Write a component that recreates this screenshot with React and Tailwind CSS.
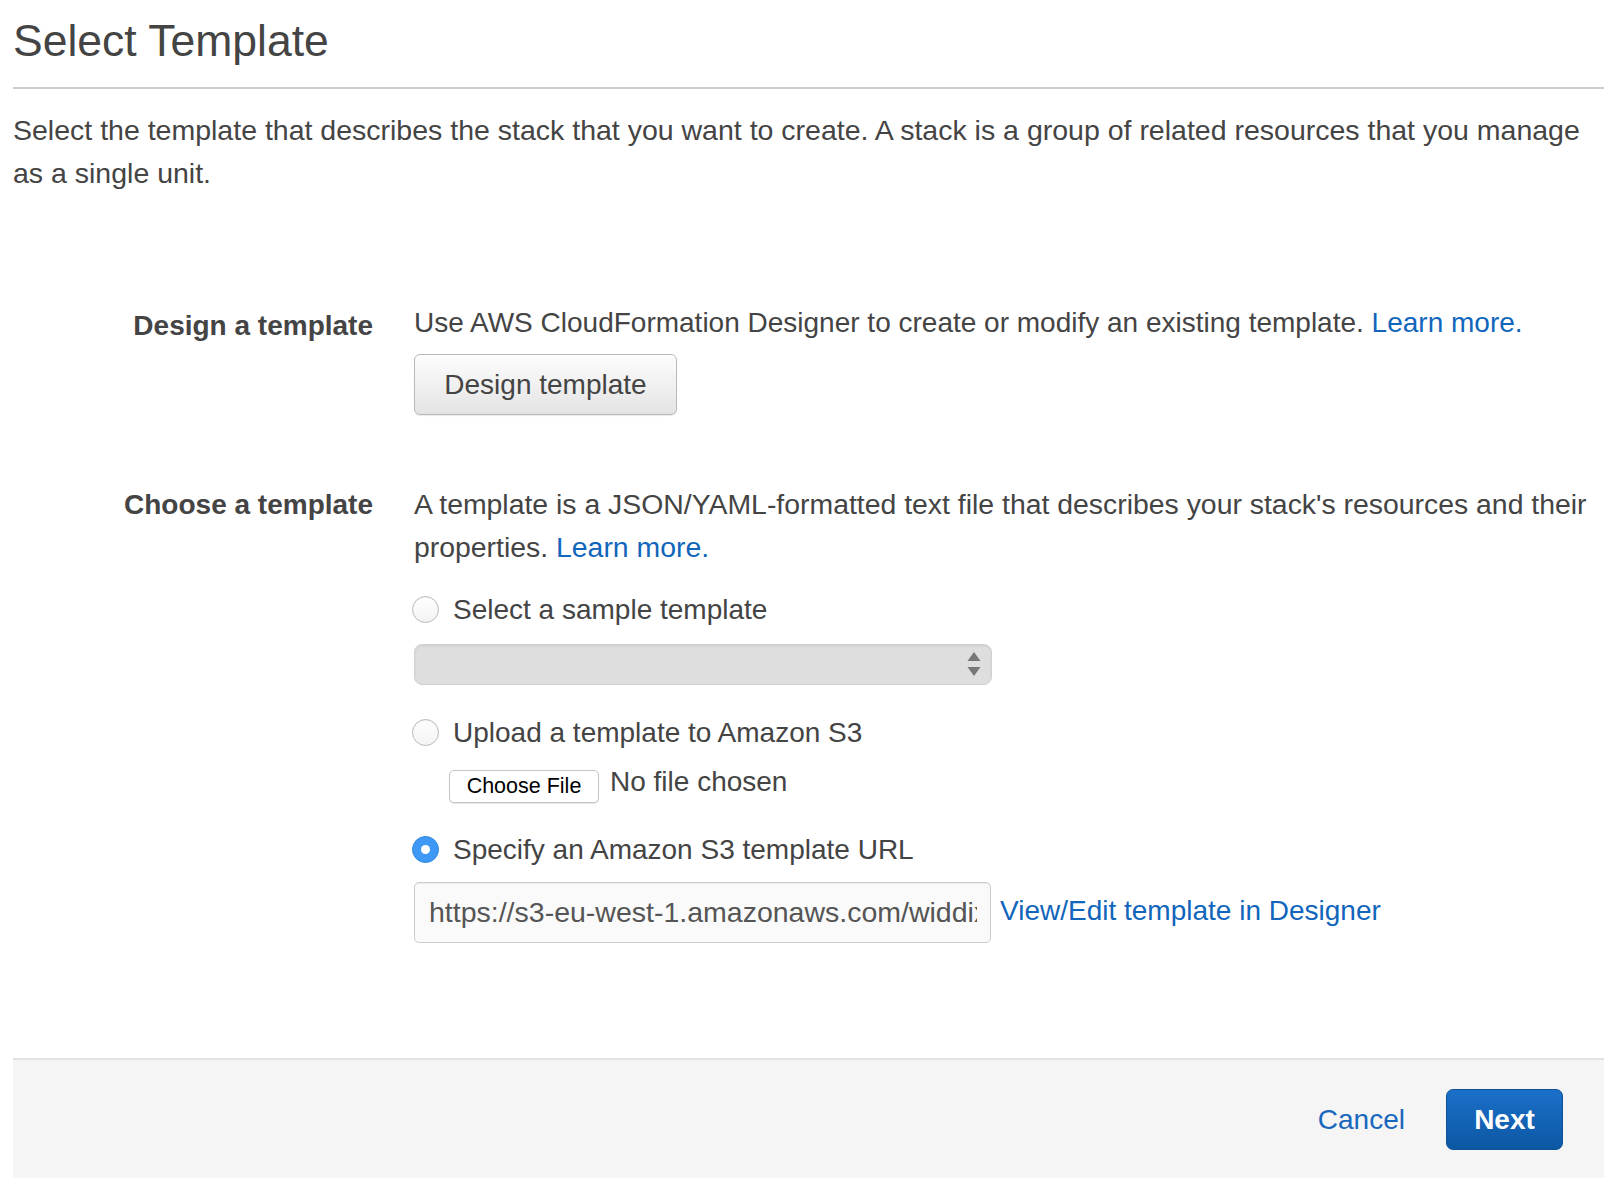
import { useState } from "react";

const Radio = ({ checked, onClick }) => (
  <span
    onClick={onClick}
    className={
      checked
        ? "flex items-center justify-center w-[27px] h-[27px] rounded-full bg-[#3d99f5] border border-[#2f86e0] shrink-0 cursor-pointer"
        : "block w-[27px] h-[27px] rounded-full bg-gradient-to-b from-white to-[#f3f3f3] border border-[#b9b9b9] shadow-[inset_0_1px_1px_rgba(0,0,0,0.06)] shrink-0 cursor-pointer"
    }
  >
    {checked && <span className="block w-[9px] h-[9px] rounded-full bg-white"></span>}
  </span>
);

const App = () => {
  const [source, setSource] = useState("url");

  return (
    <div className="min-h-screen bg-white pl-[13px] pr-[16px] text-[#444] font-['Liberation_Sans',Arial,sans-serif]">
      <h1 className="pt-[19px] text-[44.5px] leading-[44px] font-normal">Select Template</h1>
      <div className="mt-[24px] border-t-2 border-[#cccccc]"></div>

      <p className="mt-[20px] max-w-[1585px] text-[28.5px] leading-[43px]">
        Select the template that describes the stack that you want to create. A stack is a group of related
        resources that you manage as a single unit.
      </p>

      <div className="mt-[106px] grid grid-cols-[360px_1fr] gap-x-[41px] text-[28px] leading-[43px]">
        <div className="pt-[3px] text-right font-bold">Design a template</div>
        <div>
          <div>
            Use AWS CloudFormation Designer to create or modify an existing template.{" "}
            <a href="#" className="text-[#1166bb]">
              Learn more.
            </a>
          </div>
          <button className="mt-[10px] h-[61px] w-[263px] rounded-[6px] border border-[#b9b9b9] bg-gradient-to-b from-[#fdfdfd] to-[#e4e4e4] text-[28px] text-[#444] shadow-[0_1px_1px_rgba(0,0,0,0.08)]">
            Design template
          </button>
        </div>
      </div>

      <div className="mt-[68px] grid grid-cols-[360px_1fr] gap-x-[41px] text-[28px] leading-[43px]">
        <div className="text-right font-bold">Choose a template</div>
        <div>
          <div className="text-[28.4px]">
            A template is a JSON/YAML-formatted text file that describes your stack's resources and their
            properties.{" "}
            <a href="#" className="text-[#1166bb]">
              Learn more.
            </a>
          </div>

          <div className="mt-[19px] flex items-center gap-[14px] -ml-[2px]">
            <Radio checked={source === "sample"} onClick={() => setSource("sample")} />
            <span>Select a sample template</span>
          </div>
          <div className="mt-[13px] relative flex h-[41px] w-[578px] items-center justify-end rounded-[8px] border border-[#d2d2d2] bg-[#dedede] pr-[10px] shadow-[inset_0_1px_2px_rgba(0,0,0,0.08)]">
            <svg width="14" height="26" viewBox="0 0 14 26">
              <polygon points="7,0 13.5,9 0.5,9" fill="#777" />
              <polygon points="0.5,15 13.5,15 7,24" fill="#777" />
            </svg>
          </div>

          <div className="mt-[26px] flex items-center gap-[14px] -ml-[2px]">
            <Radio checked={source === "upload"} onClick={() => setSource("upload")} />
            <span>Upload a template to Amazon S3</span>
          </div>
          <div className="mt-[16px] ml-[35px] flex items-start gap-[11px]">
            <button className="h-[33px] w-[150px] rounded-[5px] border border-[#c6c6c6] bg-white text-[21.5px] leading-[31px] text-black shadow-[0_1px_1px_rgba(0,0,0,0.1)]">
              Choose File
            </button>
            <span className="-mt-[10px]">No file chosen</span>
          </div>

          <div className="mt-[25px] flex items-center gap-[14px] -ml-[2px]">
            <Radio checked={source === "url"} onClick={() => setSource("url")} />
            <span>Specify an Amazon S3 template URL</span>
          </div>
          <div className="mt-[11px] flex items-center gap-[9px]">
            <input
              readOnly
              value="https://s3-eu-west-1.amazonaws.com/widdix-aws-cf-templates-releases-eu-west-1/stable/vpc/vpc-2azs.yaml"
              className="h-[61px] w-[577px] rounded-[5px] border border-[#cccccc] bg-[#fafafa] pl-[14px] pr-[13px] text-[28.5px] text-[#555] shadow-[inset_0_1px_1px_rgba(0,0,0,0.06)] outline-none"
            />
            <a href="#" className="-mt-[4px] text-[#1166bb]">
              View/Edit template in Designer
            </a>
          </div>
        </div>
      </div>

      <div className="mt-[115px] flex items-center justify-end gap-[41px] border-t-2 border-[#e3e3e3] bg-[#f5f5f5] pt-[29px] pb-[28px] pr-[41px] text-[28px]">
        <a href="#" className="text-[#1a67be]">
          Cancel
        </a>
        <button className="h-[61px] w-[117px] rounded-[7px] border border-[#0d5296] bg-gradient-to-b from-[#1b70c9] to-[#0c57a3] font-bold text-white">
          Next
        </button>
      </div>
    </div>
  );
};

export default App;
